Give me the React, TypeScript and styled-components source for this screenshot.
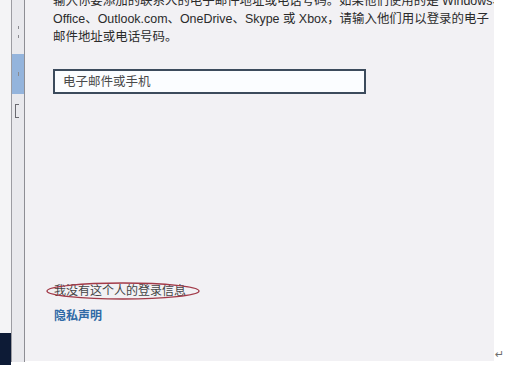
import React from "react";
import styled, { createGlobalStyle } from "styled-components";

const Global = createGlobalStyle`
  html, body { margin: 0; padding: 0; background: #ffffff; overflow: hidden; }
  body { font-family: "Liberation Sans", "Noto Sans CJK SC", sans-serif; }
`;

const Page = styled.div`
  width: 509px;
  height: 365px;
  display: flex;
  background: #ffffff;
  position: relative;
`;

const Edge = styled.div`
  width: 11px;
  height: 365px;
  display: flex;
  flex-direction: column;
  justify-content: flex-end;
  background: #f4f4f6;
`;

const DarkCorner = styled.div`
  height: 32px;
  background: #0d1b36;
`;

const Rail = styled.div`
  width: 12px;
  height: 362px;
  border-left: 1px solid #9c9ca2;
  border-right: 1px solid #8e8e94;
  background: #e9e9ed;
  display: flex;
  flex-direction: column;
  align-items: center;
`;

const RailTick = styled.div<{ $top: number; $h: number }>`
  margin-top: ${(p) => p.$top}px;
  width: 1px;
  height: ${(p) => p.$h}px;
  background: #8a8a90;
`;

const RailSelected = styled.div`
  margin-top: 16px;
  width: 12px;
  height: 40px;
  background: #94b4dc;
  display: flex;
  align-items: center;
  justify-content: center;
`;

const RailMark = styled.div`
  margin-top: 10px;
  width: 3px;
  height: 12px;
  border: 1px solid #6a6a70;
  border-right: none;
  margin-left: -2px;
`;

const Panel = styled.main`
  width: 469px;
  height: 361px;
  background: #f2f1f4;
  padding: 0 0 0 28px;
  box-sizing: border-box;
  display: flex;
  flex-direction: column;
  overflow: hidden;
`;

const Intro = styled.p`
  margin: -8px 0 0 0;
  font-family: "Liberation Sans", "Noto Sans CJK SC", sans-serif;
  font-size: 12.45px;
  line-height: 18px;
  color: #2b2b2b;
  white-space: nowrap;
`;

const EmailInput = styled.input`
  margin-top: 23px;
  width: 313px;
  height: 25px;
  box-sizing: border-box;
  border: 2px solid #3c4b5c;
  background: #fbfdff;
  padding: 0 8px;
  font-family: "Liberation Sans", "Noto Sans CJK SC", sans-serif;
  font-size: 12.5px;
  color: #333;
  outline: none;
  &::placeholder { color: #4a4a4a; }
`;

const Spacer = styled.div`
  flex: 1;
`;

const NoInfoLink = styled.a`
  position: relative;
  align-self: flex-start;
  font-size: 12px;
  line-height: 16px;
  color: #444444;
  text-decoration: none;
  margin-left: 1px;
`;

const Ellipse = styled.svg`
  position: absolute;
  left: -9px;
  top: -2px;
  pointer-events: none;
`;

const Privacy = styled.a`
  margin: 9px 0 37px 1px;
  font-size: 12px;
  line-height: 16px;
  color: #2f6aa6;
  font-weight: 600;
  text-decoration: none;
  align-self: flex-start;
`;

const ReturnMark = styled.span`
  position: absolute;
  left: 495px;
  top: 348px;
  font-size: 11px;
  color: #6e6e6e;
  font-family: "DejaVu Sans", sans-serif;
`;

export default function App() {
  return (
    <Page>
      <Global />
      <Edge>
        <DarkCorner />
      </Edge>
      <Rail>
        <RailTick $top={26} $h={3} />
        <RailTick $top={6} $h={3} />
        <RailSelected>
          <RailTick $top={0} $h={4} />
        </RailSelected>
        <RailMark />
      </Rail>
      <Panel>
        <Intro>
          输入你要添加的联系人的电子邮件地址或电话号码。如果他们使用的是 Windows、
          <br />
          Office、Outlook.com、OneDrive、Skype 或 Xbox，请输入他们用以登录的电子
          <br />
          邮件地址或电话号码。
        </Intro>
        <EmailInput placeholder="电子邮件或手机" />
        <Spacer />
        <NoInfoLink href="#">
          我没有这个人的登录信息
          <Ellipse width="156" height="20" viewBox="0 0 156 20">
            <ellipse cx="78" cy="10" rx="76" ry="8" fill="none" stroke="#a23a48" strokeWidth="1.4" />
          </Ellipse>
        </NoInfoLink>
        <Privacy href="#">隐私声明</Privacy>
      </Panel>
      <ReturnMark>↵</ReturnMark>
    </Page>
  );
}
